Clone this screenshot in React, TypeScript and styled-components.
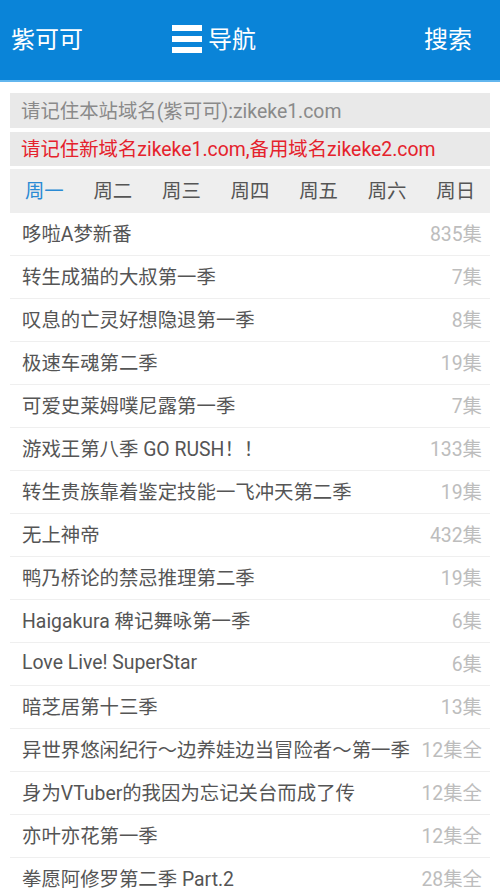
import React from "react";
import styled, { createGlobalStyle } from "styled-components";

const Global = createGlobalStyle`
  html, body { margin: 0; padding: 0; background: #fff; }
  body { font-family: Roboto, "Noto Sans CJK SC", sans-serif; }
  * { box-sizing: border-box; }
`;

const Page = styled.div`
  width: 500px;
  height: 888px;
  overflow: hidden;
  background: #fff;
`;

const Header = styled.header`
  height: 82px;
  background: #0a84d8;
  border-bottom: 2px solid #62b6ee;
  display: flex;
  align-items: center;
  padding: 0 28px 5px 11px;
  color: #fff;
  font-size: 24px;
`;

const Brand = styled.div`
  width: 161px;
`;

const Nav = styled.div`
  display: flex;
  align-items: center;
  gap: 6px;
  flex: 1;
`;

const Burger = styled.span`
  display: flex;
  flex-direction: column;
  gap: 5px;
  width: 30px;
  margin-top: 3px;
  & > i {
    display: block;
    height: 6px;
    background: #fff;
  }
`;

const Search = styled.div``;

const Body = styled.div`
  padding: 11px 10px 0;
  display: flex;
  flex-direction: column;
`;

const Notice = styled.div<{ $red?: boolean; $mt?: number }>`
  height: ${(p) => (p.$red ? 34 : 35)}px;
  margin-top: ${(p) => p.$mt ?? 0}px;
  background: #e9e9e9;
  color: ${(p) => (p.$red ? "#e5222c" : "#8a8a8a")};
  font-size: 19.4px;
  padding: 0 0 3px 11px;
  display: flex;
  align-items: center;
  white-space: nowrap;
`;

const Tabs = styled.div`
  margin-top: 3px;
  height: 44px;
  background: #eeeeee;
  display: grid;
  grid-template-columns: repeat(7, 1fr);
  align-items: center;
  padding-bottom: 3px;
`;

const Tab = styled.div<{ $active?: boolean }>`
  text-align: center;
  font-size: 19.4px;
  color: ${(p) => (p.$active ? "#2a8ad4" : "#555")};
`;

const List = styled.ul`
  list-style: none;
  margin: 0;
  padding: 0;
`;

const Row = styled.li`
  height: 43px;
  border-bottom: 1px solid #efefef;
  display: flex;
  align-items: center;
  justify-content: space-between;
  padding: 0 8px 4px 12px;
  font-size: 19.4px;
`;

const Title = styled.span`
  color: #555;
  white-space: nowrap;
`;

const Count = styled.span`
  color: #bdbdbd;
  white-space: nowrap;
`;

const items: [string, string][] = [
  ["哆啦A梦新番", "835集"],
  ["转生成猫的大叔第一季", "7集"],
  ["叹息的亡灵好想隐退第一季", "8集"],
  ["极速车魂第二季", "19集"],
  ["可爱史莱姆噗尼露第一季", "7集"],
  ["游戏王第八季 GO RUSH！！", "133集"],
  ["转生贵族靠着鉴定技能一飞冲天第二季", "19集"],
  ["无上神帝", "432集"],
  ["鸭乃桥论的禁忌推理第二季", "19集"],
  ["Haigakura 稗记舞咏第一季", "6集"],
  ["Love Live! SuperStar", "6集"],
  ["暗芝居第十三季", "13集"],
  ["异世界悠闲纪行～边养娃边当冒险者～第一季", "12集全"],
  ["身为VTuber的我因为忘记关台而成了传", "12集全"],
  ["亦叶亦花第一季", "12集全"],
  ["拳愿阿修罗第二季 Part.2", "28集全"],
];

const days = ["周一", "周二", "周三", "周四", "周五", "周六", "周日"];

export default function App() {
  return (
    <Page>
      <Global />
      <Header>
        <Brand>紫可可</Brand>
        <Nav>
          <Burger>
            <i />
            <i />
            <i />
          </Burger>
          导航
        </Nav>
        <Search>搜索</Search>
      </Header>
      <Body>
        <Notice>请记住本站域名(紫可可):zikeke1.com</Notice>
        <Notice $red $mt={4}>
          请记住新域名zikeke1.com,备用域名zikeke2.com
        </Notice>
        <Tabs>
          {days.map((d, i) => (
            <Tab key={d} $active={i === 0}>
              {d}
            </Tab>
          ))}
        </Tabs>
        <List>
          {items.map(([t, c]) => (
            <Row key={t}>
              <Title>{t}</Title>
              <Count>{c}</Count>
            </Row>
          ))}
        </List>
      </Body>
    </Page>
  );
}
